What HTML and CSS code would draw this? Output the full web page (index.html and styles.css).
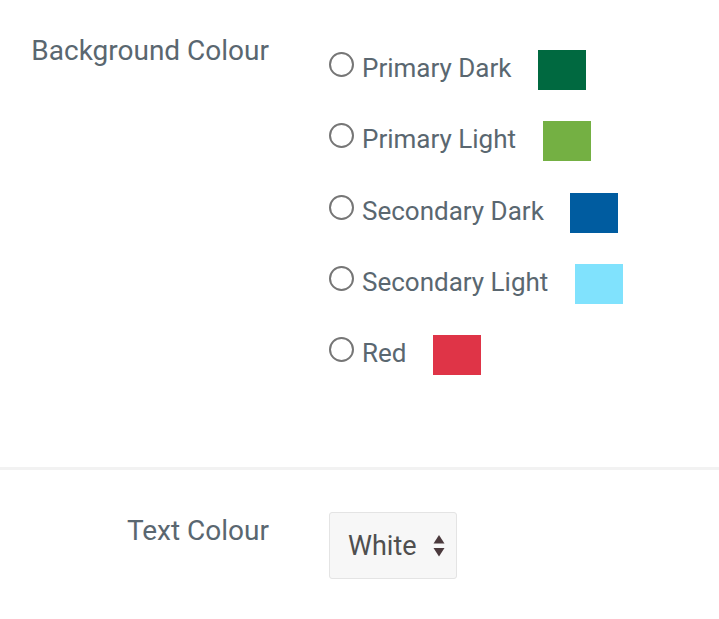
FILE: index.html
```html
<!DOCTYPE html>
<html lang="en">
<head>
<meta charset="utf-8">
<title>Colour settings</title>
<link rel="stylesheet" href="styles.css">
</head>
<body>
<form class="settings">
  <section class="field-row field-row--bg">
    <div class="field-label">Background Colour</div>
    <div class="options">
      <label class="option">
        <input type="radio" name="bg" class="radio">
        <span class="option-text">Primary Dark</span>
        <span class="swatch swatch--primary-dark"></span>
      </label>
      <label class="option">
        <input type="radio" name="bg" class="radio">
        <span class="option-text">Primary Light</span>
        <span class="swatch swatch--primary-light"></span>
      </label>
      <label class="option">
        <input type="radio" name="bg" class="radio">
        <span class="option-text">Secondary Dark</span>
        <span class="swatch swatch--secondary-dark"></span>
      </label>
      <label class="option">
        <input type="radio" name="bg" class="radio">
        <span class="option-text">Secondary Light</span>
        <span class="swatch swatch--secondary-light"></span>
      </label>
      <label class="option">
        <input type="radio" name="bg" class="radio">
        <span class="option-text">Red</span>
        <span class="swatch swatch--red"></span>
      </label>
    </div>
  </section>
  <section class="field-row field-row--text">
    <div class="field-label field-label--select">Text Colour</div>
    <div class="select-wrap">
      <select class="select">
        <option>White</option>
        <option>Black</option>
      </select>
      <svg class="select-arrows" width="12" height="22" viewBox="0 0 12 22" aria-hidden="true">
        <path d="M6 0 L11.5 8.5 L0.5 8.5 Z" fill="#4b3a3d"/>
        <path d="M6 21.5 L11.5 13 L0.5 13 Z" fill="#4b3a3d"/>
      </svg>
    </div>
  </section>
</form>
</body>
</html>
```

FILE: styles.css
```css
html, body {
  margin: 0;
  padding: 0;
  background: #ffffff;
}

body {
  font-family: Roboto, "Noto Sans", Arial, sans-serif;
  color: #5a6770;
  width: 719px;
  height: 619px;
  overflow: hidden;
}

.settings {
  margin: 0;
}

.field-row {
  display: grid;
  grid-template-columns: 269px 1fr;
  column-gap: 60px;
  align-items: start;
}

.field-row--bg {
  padding-top: 34px;
  padding-bottom: 92px;
  border-bottom: 3px solid #f2f2f2;
}

.field-row--text {
  padding-top: 42px;
}

.field-label {
  font-size: 28px;
  line-height: 33px;
  text-align: right;
  white-space: nowrap;
}

.field-label--select {
  padding-top: 2px;
}

.options {
  display: flex;
  flex-direction: column;
  gap: 31.25px;
  padding-top: 16px;
}

.option {
  display: flex;
  align-items: flex-start;
  height: 40px;
  cursor: pointer;
}

.radio {
  appearance: none;
  -webkit-appearance: none;
  margin: 2px 0 0 0;
  width: 25px;
  height: 25px;
  border: 2px solid #767676;
  border-radius: 50%;
  background: #fff;
  flex: none;
  box-sizing: border-box;
}

.option-text {
  font-size: 26px;
  line-height: 30px;
  margin-left: 8px;
  margin-top: 3px;
  white-space: nowrap;
}

.swatch {
  display: block;
  width: 48px;
  height: 40px;
  margin-left: 26.5px;
  flex: none;
}

.swatch--primary-dark { background: #006940; }
.swatch--primary-light { background: #74b043; }
.swatch--secondary-dark { background: #005ca0; }
.swatch--secondary-light { background: #80e2fd; }
.swatch--red { background: #df3447; }

.select-wrap {
  position: relative;
  display: inline-block;
  justify-self: start;
}

.select {
  appearance: none;
  -webkit-appearance: none;
  display: block;
  width: 128px;
  height: 67px;
  box-sizing: border-box;
  margin: 0;
  padding: 0 0 0 18px;
  border: 1.5px solid #e4e4e4;
  border-radius: 3px;
  background: #f7f7f7;
  font-family: Roboto, "Noto Sans", Arial, sans-serif;
  font-size: 27px;
  color: #4f4f4f;
}

.select-arrows {
  position: absolute;
  right: 12px;
  top: 23px;
  pointer-events: none;
}
```
